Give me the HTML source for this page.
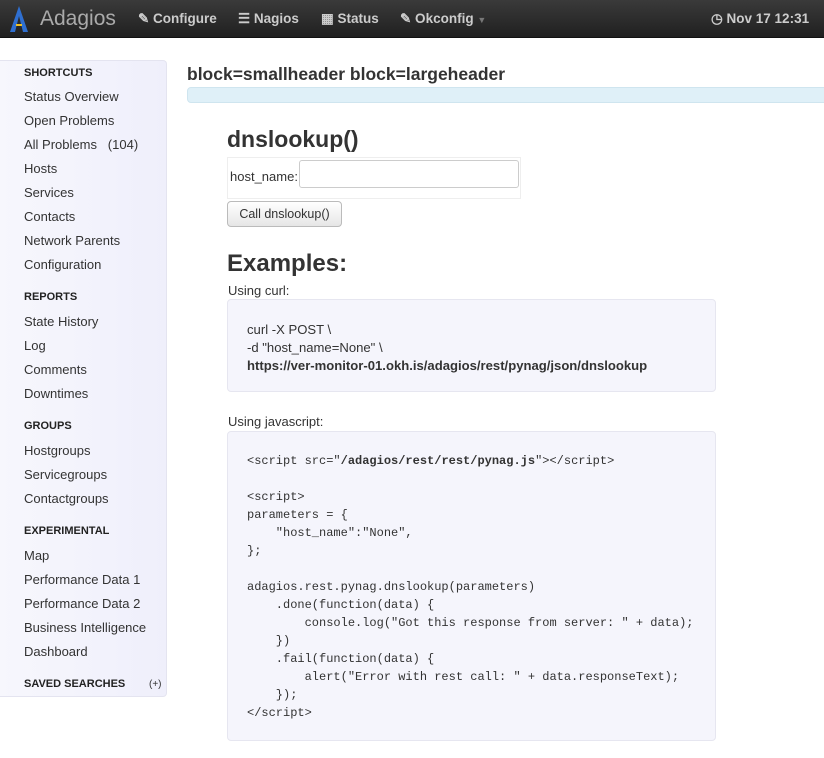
<!DOCTYPE html>
<html><head><meta charset="utf-8"><style>
*{box-sizing:border-box;margin:0;padding:0}
body{width:824px;height:758px;background:#fff;font-family:"Liberation Sans",sans-serif;color:#333;font-size:13px;position:relative;overflow:hidden}
.nav{position:absolute;left:0;top:0;width:824px;height:38px;background:linear-gradient(#3a3a3a,#202020);border-bottom:1px solid #111}
.nav span{position:absolute;top:11px;color:#ccc;font-weight:bold;font-size:13.5px}
.brand{position:absolute;left:40px;top:7px;color:#aaa;font-size:21px}
.side{position:absolute;left:0;top:60px;width:167px;height:637px;background:linear-gradient(90deg,#f7f7fd,#efeffb);border:1px solid #e4e4f0;border-left:none;border-radius:0 4px 4px 0}
.side div{position:absolute;left:24px;font-size:13px;color:#333}
.side .h{font-size:11px;font-weight:bold;color:#222}
h1{position:absolute;left:187px;top:64px;font-size:17.5px;font-weight:bold;color:#333}
.bar{position:absolute;left:187px;top:87px;width:650px;height:16px;background:#dff0f8;border:1px solid #cfe5ef;border-radius:4px}
.pre{position:absolute;left:227px;width:489px;background:#f5f5fc;border:1px solid #e6e6f0;border-radius:4px}
.mono{font-family:"Liberation Mono",monospace;font-size:12px;white-space:pre;line-height:18px;color:#333}
</style></head><body>
<div class="nav">
<svg style="position:absolute;left:8px;top:5px" width="22" height="28" viewBox="0 0 22 28"><path d="M11 1 L2 27 L7 27 L11 11 L15 27 L20 27 Z" fill="#2f6fd0"/><rect x="8" y="19" width="6" height="2" fill="#f0c020"/></svg>
<div class="brand">Adagios</div>
<span style="left:138px">&#9998; Configure</span>
<span style="left:238px">&#9776; Nagios</span>
<span style="left:321px">&#9638; Status</span>
<span style="left:400px">&#9998; Okconfig <span style="position:static;color:#777;font-size:9px">&#9660;</span></span>
<span style="left:711px">&#9719; Nov 17 12:31</span>
</div>
<div class="side">
<div class="h" style="top:6px">SHORTCUTS</div>
<div style="top:28px">Status Overview</div>
<div style="top:52px">Open Problems</div>
<div style="top:76px">All Problems &nbsp;&nbsp;(104)</div>
<div style="top:100px">Hosts</div>
<div style="top:124px">Services</div>
<div style="top:148px">Contacts</div>
<div style="top:172px">Network Parents</div>
<div style="top:196px">Configuration</div>
<div class="h" style="top:230px">REPORTS</div>
<div style="top:253px">State History</div>
<div style="top:277px">Log</div>
<div style="top:301px">Comments</div>
<div style="top:325px">Downtimes</div>
<div class="h" style="top:359px">GROUPS</div>
<div style="top:382px">Hostgroups</div>
<div style="top:406px">Servicegroups</div>
<div style="top:430px">Contactgroups</div>
<div class="h" style="top:464px">EXPERIMENTAL</div>
<div style="top:487px">Map</div>
<div style="top:511px">Performance Data 1</div>
<div style="top:535px">Performance Data 2</div>
<div style="top:559px">Business Intelligence</div>
<div style="top:583px">Dashboard</div>
<div class="h" style="top:617px">SAVED SEARCHES</div>
<div style="top:618px;left:149px;font-size:10px">(+)</div>
</div>
<h1>block=smallheader block=largeheader</h1>
<div class="bar"></div>
<div style="position:absolute;left:227px;top:126px;font-size:23px;font-weight:bold;color:#333">dnslookup()</div>
<div style="position:absolute;left:227px;top:157px;width:294px;height:42px;border:1px solid #eee"></div>
<div style="position:absolute;left:230px;top:169px;font-size:13px">host_name:</div>
<div style="position:absolute;left:299px;top:160px;width:220px;height:28px;border:1px solid #ccc;border-radius:3px;background:#fff"></div>
<div style="position:absolute;left:227px;top:201px;width:115px;height:26px;border:1px solid #bbb;border-radius:4px;background:linear-gradient(#fff,#e6e6e6);font-size:12.5px;text-align:center;line-height:24px">Call dnslookup()</div>
<div style="position:absolute;left:227px;top:250px;font-size:24px;font-weight:bold;color:#333">Examples:</div>
<div style="position:absolute;left:228px;top:283px;font-size:13px">Using curl:</div>
<div class="pre" style="top:299px;height:93px"><div style="position:absolute;left:19px;top:21px;font-size:13.1px;line-height:18px">curl -X POST \<br>-d "host_name=None" \<br><b>https://ver-monitor-01.okh.is/adagios/rest/pynag/json/dnslookup</b></div></div>
<div style="position:absolute;left:228px;top:414px;font-size:13px">Using javascript:</div>
<div class="pre" style="top:431px;height:310px"><div class="mono" style="position:absolute;left:19px;top:20px">&lt;script src="<b>/adagios/rest/rest/pynag.js</b>"&gt;&lt;/script&gt;

&lt;script&gt;
parameters = {
    "host_name":"None",
};

adagios.rest.pynag.dnslookup(parameters)
    .done(function(data) {
        console.log("Got this response from server: " + data);
    })
    .fail(function(data) {
        alert("Error with rest call: " + data.responseText);
    });
&lt;/script&gt;</div></div>
</body></html>
